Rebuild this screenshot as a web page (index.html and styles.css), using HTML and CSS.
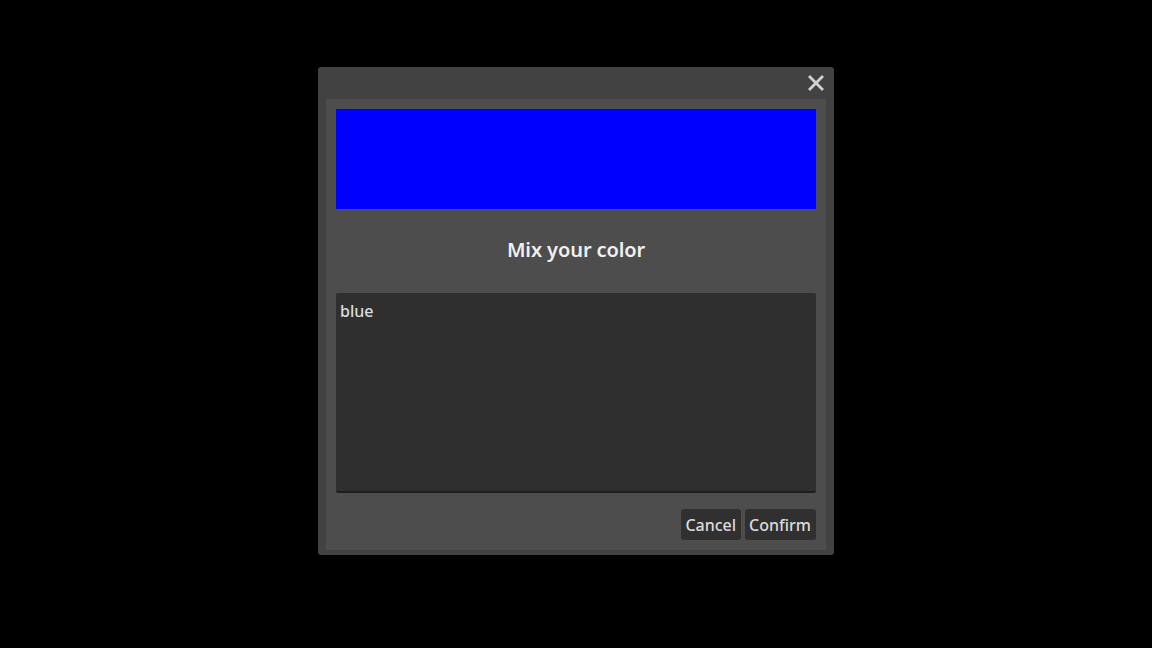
FILE: index.html
```html
<!DOCTYPE html>
<html>
<head>
<meta charset="utf-8">
<link rel="stylesheet" href="styles.css">
</head>
<body>
<div class="screen">
  <div class="dialog">
    <div class="titlebar">
      <svg class="close" width="16" height="16" viewBox="0 0 16 16"><path d="M2 2 L14 14 M14 2 L2 14" stroke="#d2d2d2" stroke-width="2.8" stroke-linecap="square" fill="none"/></svg>
    </div>
    <div class="panel">
      <div class="swatch"></div>
      <div class="title">Mix your color</div>
      <div class="textarea">blue</div>
      <div class="actions">
        <button class="btn">Cancel</button>
        <button class="btn">Confirm</button>
      </div>
    </div>
  </div>
</div>
</body>
</html>
```
FILE: styles.css
```css
html, body { margin: 0; padding: 0; background: #000; }
body { font-family: "Noto Sans", "Open Sans", sans-serif; }
.screen {
  width: 1152px; height: 648px;
  display: flex; justify-content: center; align-items: flex-start;
}
.dialog {
  margin-top: 67px;
  width: 516px;
  height: 488px;
  box-sizing: border-box;
  background: #424242;
  border-radius: 3px;
  padding: 0 8px 5px 8px;
  display: flex; flex-direction: column;
}
.titlebar {
  height: 33px;
  display: flex; justify-content: flex-end; align-items: center;
}
.close { margin-right: 2px; margin-top: 0; }
.panel {
  flex: 1;
  background: #4d4d4d;
  padding: 10px;
  display: flex; flex-direction: column;
}
.swatch { height: 100px; background: #0000ff; }
.title {
  color: #f0f0f0;
  font-size: 20px;
  font-weight: 600;
  letter-spacing: -0.1px;
  text-align: center;
  height: 84px;
  line-height: 82px;
}
.textarea {
  height: 200px;
  background: #2f2f2f;
  border-bottom: 2px solid #1e1e1e;
  border-radius: 2px;
  color: #dcdcdc;
  font-size: 16px;
  font-weight: 500;
  padding: 7px 4px;
  box-sizing: border-box;
}
.actions {
  display: flex; justify-content: flex-end; gap: 4px;
  margin-top: 16px;
}
.btn {
  font-family: "Noto Sans", "Open Sans", sans-serif;
  font-size: 16px;
  font-weight: 500;
  color: #dcdcdc;
  background: #303030;
  border: none;
  border-radius: 3px;
  height: 31px;
  padding: 0 5px 0 4px;
}
```
